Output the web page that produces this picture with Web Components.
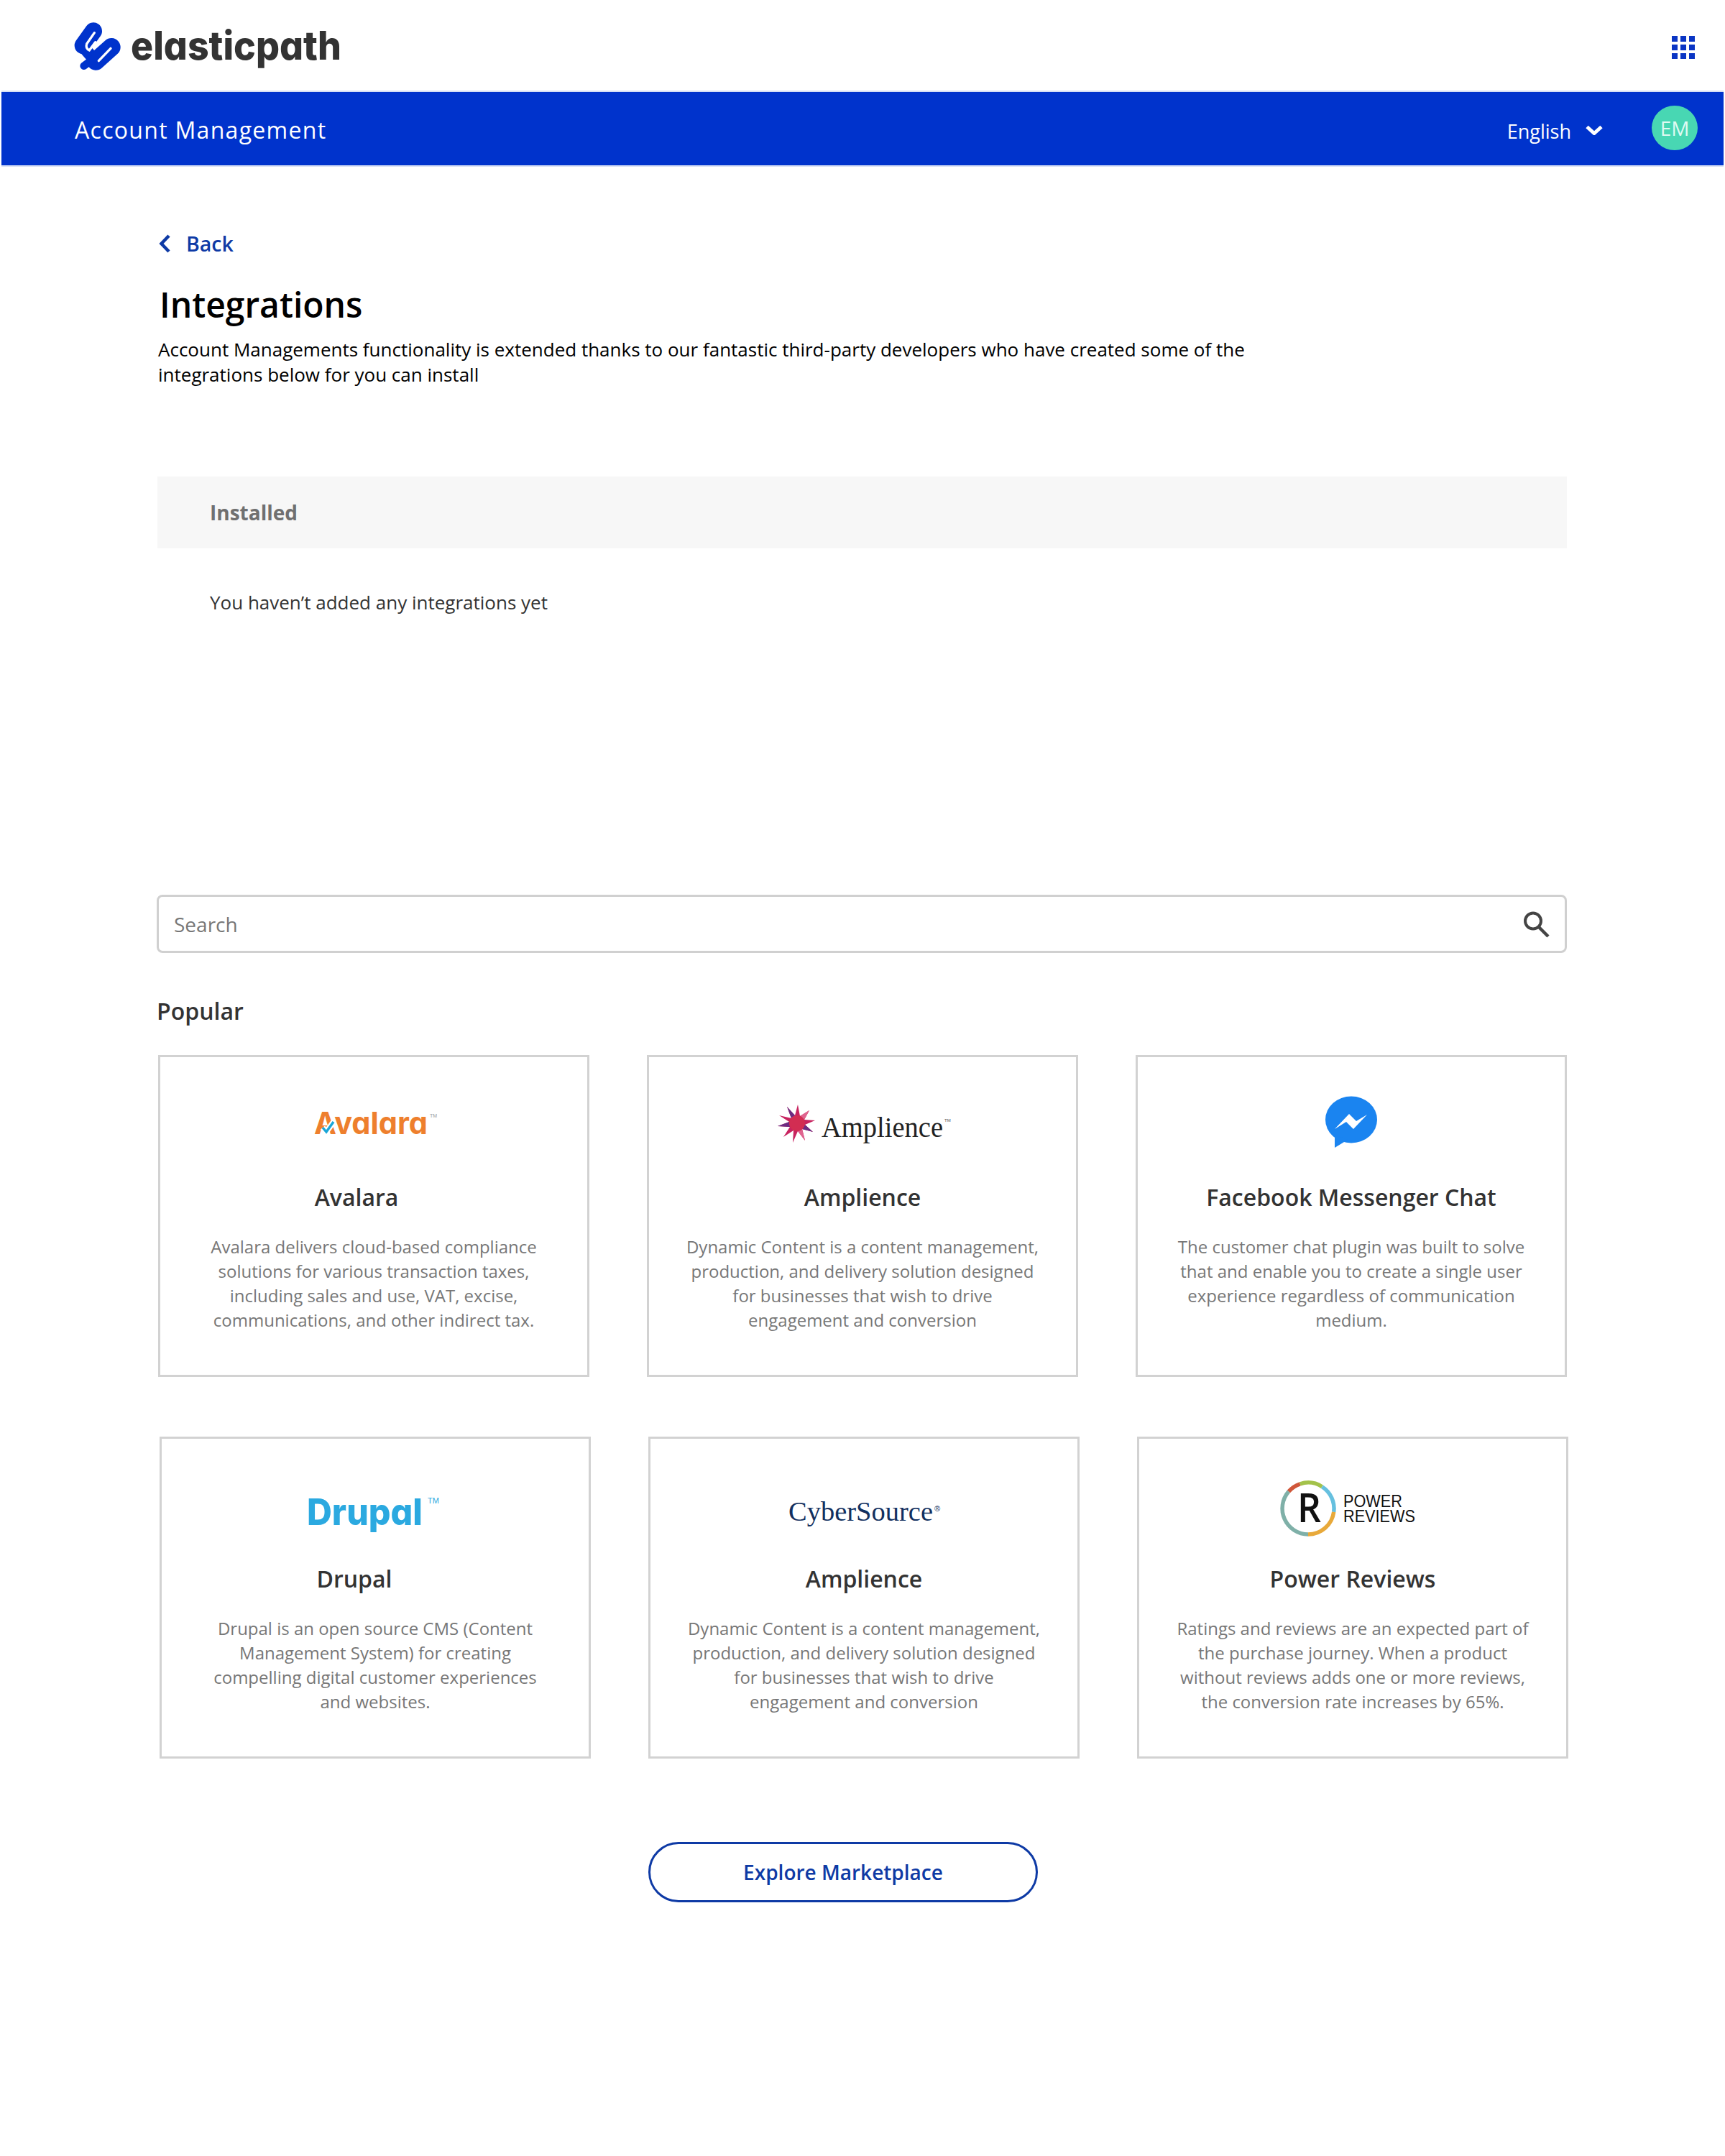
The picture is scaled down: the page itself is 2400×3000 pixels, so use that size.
<!DOCTYPE html>
<html>
<head>
<meta charset="utf-8">
<title>Integrations</title>
<style>
  html, body { margin: 0; background: #fff; }
  body { font-family: "Open Sans", "Liberation Sans", sans-serif; color: #000; }
  main { display: block; padding: 0 220px 0 218px; }
</style>
</head>
<body>
<ep-header></ep-header>
<ep-bar></ep-bar>
<main>
  <ep-back></ep-back>
  <ep-intro></ep-intro>
  <ep-installed></ep-installed>
  <ep-search></ep-search>
  <ep-popular></ep-popular>
  <ep-grid>
    <ep-card heading="Avalara" shift="48">
      <logo-avalara slot="logo"></logo-avalara>
      Avalara delivers cloud-based compliance solutions for various transaction taxes, including sales and use, VAT, excise, communications, and other indirect tax.
    </ep-card>
    <ep-card heading="Amplience">
      <logo-amplience slot="logo"></logo-amplience>
      Dynamic Content is a content management, production, and delivery solution designed for businesses that wish to drive engagement and conversion
    </ep-card>
    <ep-card heading="Facebook Messenger Chat">
      <logo-messenger slot="logo"></logo-messenger>
      The customer chat plugin was built to solve that and enable you to create a single user experience regardless of communication medium.
    </ep-card>
  </ep-grid>
  <ep-grid second>
    <ep-card heading="Drupal" shift="58">
      <logo-drupal slot="logo"></logo-drupal>
      Drupal is an open source CMS (Content Management System) for creating compelling digital customer experiences and websites.
    </ep-card>
    <ep-card heading="Amplience">
      <logo-cybersource slot="logo"></logo-cybersource>
      Dynamic Content is a content management, production, and delivery solution designed for businesses that wish to drive engagement and conversion
    </ep-card>
    <ep-card heading="Power Reviews">
      <logo-power slot="logo"></logo-power>
      Ratings and reviews are an expected part of the purchase journey. When a product without reviews adds one or more reviews, the conversion rate increases by 65%.
    </ep-card>
  </ep-grid>
  <ep-explore></ep-explore>
</main>

<script>
class EpHeader extends HTMLElement {
    constructor() {
        super();
        this.attachShadow({ mode: 'open' });
        this.shadowRoot.innerHTML = `
        <style>
            :host { display: flex; height: 126px; justify-content: space-between; align-items: flex-start; }
            .brand { display: block; }
            .apps { display: grid; grid-template-columns: repeat(3, 8px); gap: 4px; margin: 50px 42px 0 0; }
            .apps i { height: 8px; background: #0a35c4; }
        </style>
        <svg class="brand" width="500" height="126" viewBox="0 0 500 126">
            <g transform="translate(80 10) scale(.3333)" fill="none" stroke-linecap="round">
                <path d="M150 100 L107 160" stroke="#0033cc" stroke-width="72"/>
                <path d="M225 167 L160 225" stroke="#0033cc" stroke-width="76"/>
                <path d="M107 165 L150 215" stroke="#0033cc" stroke-width="50"/>
                <path d="M150 215 L110 245" stroke="#0033cc" stroke-width="32"/>
                <path d="M154 107 L122 153 Q116 172 133 180 L158 146" stroke="#fff" stroke-width="10"/>
                <path d="M222 172 L172 224" stroke="#fff" stroke-width="10"/>
            </g>
            <text x="182" y="83" textLength="293" lengthAdjust="spacingAndGlyphs" font-family="Inter, 'Liberation Sans', sans-serif" font-weight="800" font-size="55" fill="#333" style="font-feature-settings:'cv11'">elasticpath</text>
        </svg>
        <div class="apps"><i></i><i></i><i></i><i></i><i></i><i></i><i></i><i></i><i></i></div>
      `;
    }
}
customElements.define('ep-header', EpHeader);

class EpBar extends HTMLElement {
    constructor() {
        super();
        this.attachShadow({ mode: 'open' });
        this.shadowRoot.innerHTML = `
        <style>
            :host { display: flex; box-sizing: border-box; height: 106px; margin: 0 2px; align-items: center; background: #0033cc; border-top: 2px solid #d5def4; border-bottom: 2px solid #d5def4; color: #fff; }
            .title { font-size: 32px; letter-spacing: 1.3px; margin-left: 102px; flex: 1; margin-top: 2px; }
            .lang { font-size: 27px; margin-top: 6px; margin-left: 3px; }
            .arrow { margin: 4px 68px 0 20px; display: block; }
            .avatar { width: 64px; height: 62px; border-radius: 50%; background: #48d7b3; color: #dffaf2; font-size: 28px; display: flex; align-items: center; justify-content: center; margin: -3px 36px 0 0; padding-top: 1px; box-sizing: border-box; }
        </style>
        <div class="title">Account Management</div>
        <div class="lang">English</div>
        <svg class="arrow" width="24" height="14" viewBox="0 0 24 14"><path d="M2 2.5 L12 11.5 L22 2.5" fill="none" stroke="#fff" stroke-width="5"/></svg>
        <div class="avatar">EM</div>
      `;
    }
}
customElements.define('ep-bar', EpBar);

class EpBack extends HTMLElement {
    constructor() {
        super();
        this.attachShadow({ mode: 'open' });
        this.shadowRoot.innerHTML = `
        <style>
            :host { display: flex; align-items: center; gap: 22px; margin: 88px 0 0 3px; height: 38px; padding-bottom: 2px; color: #0e3aa5; font-size: 28.5px; font-weight: 600; }
        </style>
        <svg width="16" height="26" viewBox="0 0 16 26"><path d="M14 2 L3.5 13 L14 24" fill="none" stroke="#0e3aa5" stroke-width="4.5"/></svg>
        <span>Back</span>
      `;
    }
}
customElements.define('ep-back', EpBack);

class EpIntro extends HTMLElement {
    constructor() {
        super();
        this.attachShadow({ mode: 'open' });
        this.shadowRoot.innerHTML = `
        <style>
            :host { display: block; margin: 0 0 0 2px; }
            h1 { margin: 30px 0 0 2px; font-size: 48px; font-weight: 600; line-height: 68px; color: #000; }
            p { margin: 11px 0 0; width: 1540px; font-size: 26px; line-height: 35px; color: #000; }
        </style>
        <h1>Integrations</h1>
        <p>Account Managements functionality is extended thanks to our fantastic third-party developers who have created some of the integrations below for you can install</p>
      `;
    }
}
customElements.define('ep-intro', EpIntro);

class EpInstalled extends HTMLElement {
    constructor() {
        super();
        this.attachShadow({ mode: 'open' });
        this.shadowRoot.innerHTML = `
        <style>
            :host { display: block; margin: 124px 0 0 1px; }
            .head { height: 100px; background: #f7f7f7; display: flex; align-items: center; padding-left: 73px; font-size: 28px; font-weight: 700; color: #707070; }
            .empty { margin: 56px 0 0 73px; font-size: 26px; line-height: 38px; color: #333; }
        </style>
        <div class="head">Installed</div>
        <div class="empty">You haven’t added any integrations yet</div>
      `;
    }
}
customElements.define('ep-installed', EpInstalled);

class EpSearch extends HTMLElement {
    constructor() {
        super();
        this.attachShadow({ mode: 'open' });
        this.shadowRoot.innerHTML = `
        <style>
            :host { display: flex; box-sizing: border-box; height: 81px; margin-top: 388px; border: 3px solid #d0d0d0; border-radius: 8px; align-items: center; justify-content: space-between; padding: 0 20px 0 21px; font-size: 28px; color: #777; }
        </style>
        <span>Search</span>
        <svg width="40" height="40" viewBox="0 0 40 40"><circle cx="16" cy="15.5" r="11" fill="none" stroke="#444" stroke-width="4"/><path d="M24 24 L37 37" stroke="#444" stroke-width="4.5"/></svg>
      `;
    }
}
customElements.define('ep-search', EpSearch);

class EpPopular extends HTMLElement {
    constructor() {
        super();
        this.attachShadow({ mode: 'open' });
        this.shadowRoot.innerHTML = `
        <style>
            :host { display: block; margin-top: 58px; font-size: 32px; font-weight: 600; line-height: 46px; color: #333; }
        </style>
        Popular
      `;
    }
}
customElements.define('ep-popular', EpPopular);

class EpGrid extends HTMLElement {
    constructor() {
        super();
        this.attachShadow({ mode: 'open' });
        this.shadowRoot.innerHTML = `
        <style>
            :host { display: grid; grid-template-columns: repeat(3, 600px); gap: 80px; margin: 38px 0 0 2px; }
            :host([second]) { margin: 83px 0 0 4px; }
        </style>
        <slot></slot>
      `;
    }
}
customElements.define('ep-grid', EpGrid);

class EpCard extends HTMLElement {
    constructor() {
        super();
        this.attachShadow({ mode: 'open' });
        this.shadowRoot.innerHTML = `
        <style>
            :host { display: flex; flex-direction: column; box-sizing: border-box; width: 600px; height: 448px; border: 3px solid #d2d2d2; }
            .logo { height: 172px; }
            h3 { margin: 0; font-size: 32px; font-weight: 600; line-height: 46px; text-align: center; color: #333; }
            .desc { margin-top: 29px; padding: 0 50px; font-size: 24px; line-height: 34px; text-align: center; color: #777; }
        </style>
        <div class="logo"><slot name="logo"></slot></div>
        <h3></h3>
        <div class="desc"><slot></slot></div>
      `;
    }

    connectedCallback() {
        const h3 = this.shadowRoot.querySelector('h3');
        h3.textContent = this.getAttribute('heading');
        // some titles sit left of centre in the design
        if (this.hasAttribute('shift')) h3.style.paddingRight = this.getAttribute('shift') + 'px';
    }
}
customElements.define('ep-card', EpCard);

class LogoAvalara extends HTMLElement {
    constructor() {
        super();
        this.attachShadow({ mode: 'open' });
        this.shadowRoot.innerHTML = `
        <style>:host { display: block; } svg { display: block; }</style>
        <svg width="594" height="172" viewBox="0 0 594 172">
            <text x="214" y="107" textLength="158" lengthAdjust="spacingAndGlyphs" font-family="Inter, sans-serif" font-weight="700" font-size="43" fill="#ee7f2d" style="font-feature-settings:'cv11'">Avalara</text>
            <path d="M226 98 L231 104 L241 90" fill="none" stroke="#fff" stroke-width="8"/>
            <path d="M226 98 L231 104 L241 90" fill="none" stroke="#1aa7d8" stroke-width="3.5"/>
            <text x="375" y="84" font-family="'Liberation Sans', sans-serif" font-size="7" fill="#999">TM</text>
        </svg>
      `;
    }
}
customElements.define('logo-avalara', LogoAvalara);

class LogoAmplience extends HTMLElement {
    constructor() {
        super();
        this.attachShadow({ mode: 'open' });
        this.shadowRoot.innerHTML = `
        <style>:host { display: block; } svg { display: block; }</style>
        <svg width="594" height="172" viewBox="0 0 594 172">
            <polygon fill="#c8235f" points="207,66 210,82 223,74 216,87 231,88 217,94 228,104 213,100 217,116 207,103 200,119 201,102 187,111 196,97 179,96 195,90 181,81 198,85 192,69 203,81"/>
            <polygon fill="#6b2d83" points="192,69 203,81 198,85"/>
            <polygon fill="#6b2d83" points="179,96 195,90 196,97"/>
            <polygon fill="#6b2d83" points="228,104 213,100 217,94"/>
            <polygon fill="#e0648f" points="223,74 216,87 210,82"/>
            <polygon fill="#e0648f" points="217,116 213,100 207,103"/>
            <circle cx="206" cy="92" r="11" fill="#d22d52"/>
            <text x="240" y="111" textLength="169" lengthAdjust="spacingAndGlyphs" font-family="'Liberation Serif', serif" font-size="40" fill="#222">Amplience</text>
            <text x="411" y="90" font-family="'Liberation Sans', sans-serif" font-size="6" fill="#555">TM</text>
        </svg>
      `;
    }
}
customElements.define('logo-amplience', LogoAmplience);

class LogoMessenger extends HTMLElement {
    constructor() {
        super();
        this.attachShadow({ mode: 'open' });
        this.shadowRoot.innerHTML = `
        <style>:host { display: block; } svg { display: block; }</style>
        <svg width="594" height="172" viewBox="0 0 594 172">
            <ellipse cx="297" cy="87" rx="36" ry="32.5" fill="#1a84f0"/>
            <polygon points="274,108 274,126 292,115" fill="#1a84f0"/>
            <polygon points="274,100 294,79 304,89 319,80 300,100 290,90" fill="#fff"/>
        </svg>
      `;
    }
}
customElements.define('logo-messenger', LogoMessenger);

class LogoDrupal extends HTMLElement {
    constructor() {
        super();
        this.attachShadow({ mode: 'open' });
        this.shadowRoot.innerHTML = `
        <style>:host { display: block; } svg { display: block; }</style>
        <svg width="594" height="172" viewBox="0 0 594 172">
            <text x="202" y="120" textLength="161" lengthAdjust="spacingAndGlyphs" font-family="Inter, sans-serif" font-weight="800" font-size="51" fill="#2ba9e0" style="font-feature-settings:'cv11'">Drupal</text>
            <text x="370" y="90" font-family="'Liberation Sans', sans-serif" font-size="11" fill="#2ba9e0">TM</text>
        </svg>
      `;
    }
}
customElements.define('logo-drupal', LogoDrupal);

class LogoCybersource extends HTMLElement {
    constructor() {
        super();
        this.attachShadow({ mode: 'open' });
        this.shadowRoot.innerHTML = `
        <style>:host { display: block; } svg { display: block; }</style>
        <svg width="594" height="172" viewBox="0 0 594 172">
            <text x="192" y="114" textLength="201" lengthAdjust="spacingAndGlyphs" font-family="'Liberation Serif', serif" font-size="38" fill="#12305f">CyberSource</text>
            <text x="395" y="101" font-family="'Liberation Sans', sans-serif" font-size="11" fill="#12305f">®</text>
        </svg>
      `;
    }
}
customElements.define('logo-cybersource', LogoCybersource);

class LogoPower extends HTMLElement {
    constructor() {
        super();
        this.attachShadow({ mode: 'open' });
        this.shadowRoot.innerHTML = `
        <style>:host { display: block; } svg { display: block; }</style>
        <svg width="594" height="172" viewBox="0 0 594 172">
            <g fill="none" stroke-width="5.5">
                <path d="M207.9 73.4 A36 36 0 0 1 223.8 62.8" stroke="#d0573a"/>
                <path d="M223.8 62.8 A36 36 0 0 1 254.4 66.7" stroke="#a3c24a"/>
                <path d="M254.4 66.7 A36 36 0 0 1 270.7 101.8" stroke="#66c0df"/>
                <path d="M270.7 101.8 A36 36 0 0 1 235 133" stroke="#e8a93a"/>
                <path d="M235 133 A36 36 0 0 1 207.9 73.4" stroke="#7fb0a8"/>
            </g>
            <text x="220" y="116" textLength="33" lengthAdjust="spacingAndGlyphs" font-family="'Open Sans', sans-serif" font-weight="600" font-size="56" fill="#111">R</text>
            <text x="284" y="95" textLength="82" lengthAdjust="spacingAndGlyphs" font-family="'Liberation Sans', sans-serif" font-size="24" fill="#111">POWER</text>
            <text x="284" y="116" textLength="100" lengthAdjust="spacingAndGlyphs" font-family="'Liberation Sans', sans-serif" font-size="24" fill="#111">REVIEWS</text>
        </svg>
      `;
    }
}
customElements.define('logo-power', LogoPower);

class EpExplore extends HTMLElement {
    constructor() {
        super();
        this.attachShadow({ mode: 'open' });
        this.shadowRoot.innerHTML = `
        <style>
            :host { display: flex; box-sizing: border-box; width: 542px; height: 84px; margin: 116px 0 0 684px; border: 3px solid #0e3aa5; border-radius: 42px; align-items: center; justify-content: center; font-size: 28px; font-weight: 600; color: #0e3aa5; }
        </style>
        Explore Marketplace
      `;
    }
}
customElements.define('ep-explore', EpExplore);
</script>
</body>
</html>
